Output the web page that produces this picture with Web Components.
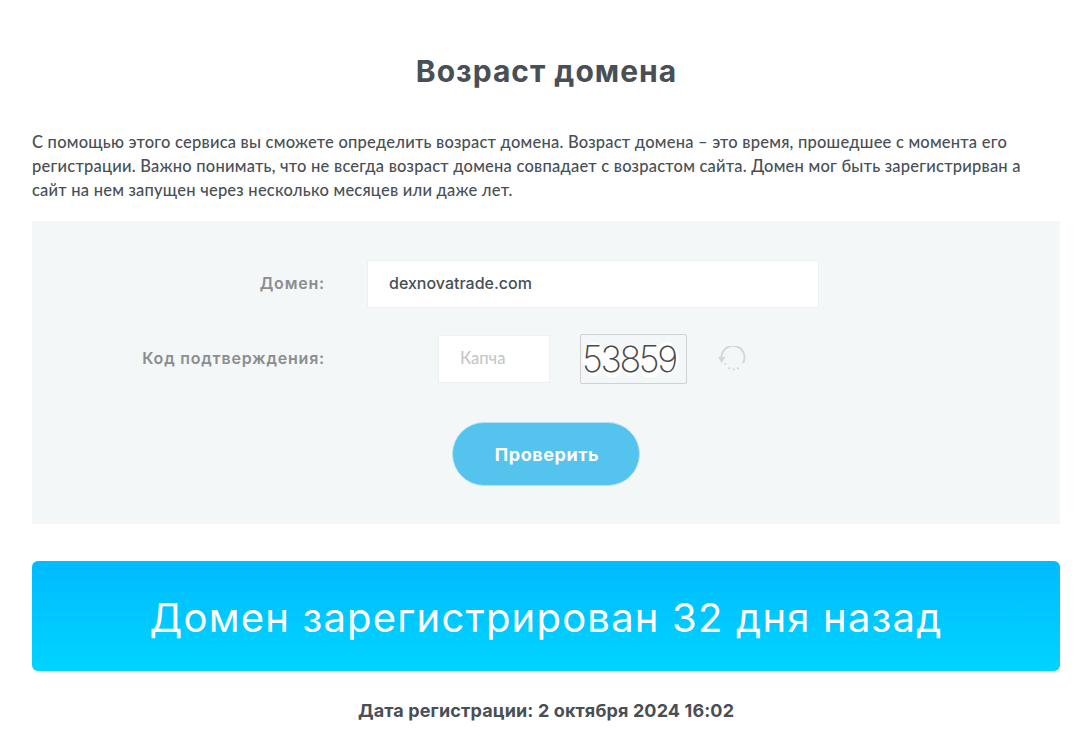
<!DOCTYPE html>
<html lang="ru">
<head>
<meta charset="utf-8">
<title>Возраст домена</title>
<style>
  html, body { margin: 0; background: #fff; }
  body { font-family: "Open Sans", sans-serif; }
</style>
</head>
<body>
<domain-page>
  <page-title>Возраст домена</page-title>
  <page-intro>С помощью этого сервиса вы сможете определить возраст домена. Возраст домена – это время, прошедшее с момента его регистрации. Важно понимать, что не всегда возраст домена совпадает с возрастом сайта. Домен мог быть зарегистрирван а сайт на нем запущен через несколько месяцев или даже лет.</page-intro>
  <check-form value="dexnovatrade.com" code="53859"></check-form>
  <result-banner>Домен зарегистрирован 32 дня назад</result-banner>
  <reg-date>Дата регистрации: 2 октября 2024 16:02</reg-date>
</domain-page>
<script>
function shadowEl(name, html) {
    class El extends HTMLElement {
        constructor() {
            super();
            this.attachShadow({ mode: 'open' });
            this.shadowRoot.innerHTML = html;
        }
    }
    window.customElements.define(name, El);
}

shadowEl('domain-page', `
  <style>
    :host { display: block; padding: 0 29px 0 32px; }
  </style>
  <slot></slot>
`);

shadowEl('page-title', `
  <style>
    :host {
      display: block;
      padding: 52px 0 0 1px;
      height: 78px;
      text-align: center;
      font: 700 30px/38px Inter, sans-serif;
      letter-spacing: 1px;
      color: #484f55;
    }
  </style>
  <slot></slot>
`);

shadowEl('page-intro', `
  <style>
    :host {
      display: block;
      font: 500 16.5px/24px Lato, sans-serif;
      letter-spacing: .22px;
      color: #484f55;
      height: 91px;
    }
  </style>
  <slot></slot>
`);

class CheckForm extends HTMLElement {
    constructor() {
        super();
        this.attachShadow({ mode: 'open' });
        this.shadowRoot.innerHTML = `
        <style>
          :host {
            display: block;
            height: 303px;
            box-sizing: border-box;
            padding-top: 39px;
            background: #f4f7f8;
          }
          .row { display: flex; align-items: center; column-gap: 42px; }
          .row--code { margin-top: 26px; }
          label {
            width: 293px;
            padding-bottom: 2px;
            text-align: right;
            font: 600 16px/20px Inter, sans-serif;
            letter-spacing: .8px;
            color: #8b8e90;
          }
          .field {
            box-sizing: border-box;
            height: 48px;
            background: #fff;
            border: 1px solid #eef1f2;
            display: flex;
            align-items: center;
          }
          .field--domain {
            width: 452px;
            padding: 0 0 2px 21px;
            font: 500 16px/20px Inter, sans-serif;
            color: #484f55;
          }
          .code { display: flex; align-items: center; margin-left: 71px; }
          .field--code {
            width: 112px;
            padding: 0 0 2px 21px;
            font: 500 16.5px/20px Lato, sans-serif;
            color: #c4c7c9;
          }
          .captcha {
            box-sizing: border-box;
            width: 107px;
            height: 50px;
            margin-left: 30px;
            border: 1px solid #cfd2d3;
            border-radius: 2px;
            display: flex;
            align-items: center;
            padding-left: 1px;
          }
          .captcha span {
            display: block;
            width: 98px;
            font: 200 36px/36px Inter, sans-serif;
            letter-spacing: -2.4px;
            white-space: nowrap;
            color: #4a4a4a;
            background:
              radial-gradient(ellipse 11px 17px at 12px 18px, #fff 98%, transparent),
              radial-gradient(ellipse 11px 16px at 30px 21px, #fff 98%, transparent),
              radial-gradient(ellipse 11px 16px at 49px 19px, #fff 98%, transparent),
              radial-gradient(ellipse 11px 17px at 68px 21px, #fff 98%, transparent),
              radial-gradient(ellipse 12px 16px at 85px 17px, #fff 98%, transparent);
          }
          svg { margin: 2px 0 0 31px; display: block; }
          .actions { display: flex; justify-content: center; margin-top: 38px; }
          button {
            box-sizing: border-box;
            width: 188px;
            height: 64px;
            border: 1px solid #b9e2f2;
            border-radius: 32px;
            background: #54c3ed;
            color: #fff;
            font: 700 18px/20px Inter, sans-serif;
            letter-spacing: .55px;
            padding: 2px 0 0 2px;
          }
        </style>
        <div class="row">
          <label>Домен:</label>
          <div class="field field--domain">${this.getAttribute('value')}</div>
        </div>
        <div class="row row--code">
          <label>Код подтверждения:</label>
          <div class="code">
            <div class="field field--code">Капча</div>
            <div class="captcha"><span>${this.getAttribute('code')}</span></div>
            <svg width="28" height="28" viewBox="0 0 28 28" fill="none" stroke="#d3d8da" stroke-width="2">
              <path d="M3.5 11A11.5 11.5 0 1 1 25 17"/>
              <path d="M0 11H7.5L3.5 17Z" fill="#d3d8da" stroke="none"/>
              <g fill="#d3d8da" stroke="none">
                <circle cx="7.3" cy="18" r="1.1"/>
                <circle cx="11.3" cy="22.3" r="1.1"/>
                <circle cx="15.7" cy="23.3" r="1.1"/>
                <circle cx="20" cy="22.3" r="1.1"/>
              </g>
            </svg>
          </div>
        </div>
        <div class="actions"><button type="button">Проверить</button></div>
        `;
    }
}
window.customElements.define('check-form', CheckForm);

shadowEl('result-banner', `
  <style>
    :host {
      display: flex;
      align-items: center;
      justify-content: center;
      box-sizing: border-box;
      height: 110px;
      margin-top: 37px;
      padding-top: 3px;
      border-radius: 6px;
      background: linear-gradient(#00bbff, #00d4ff);
      color: #fff;
      font: 400 40px/50px Inter, sans-serif;
      letter-spacing: 1.2px;
    }
  </style>
  <slot></slot>
`);

shadowEl('reg-date', `
  <style>
    :host {
      display: block;
      margin-top: 28px;
      text-align: center;
      font: 700 18px/24px Inter, sans-serif;
      letter-spacing: .13px;
      color: #484f55;
    }
  </style>
  <slot></slot>
`);
</script>
</body>
</html>
